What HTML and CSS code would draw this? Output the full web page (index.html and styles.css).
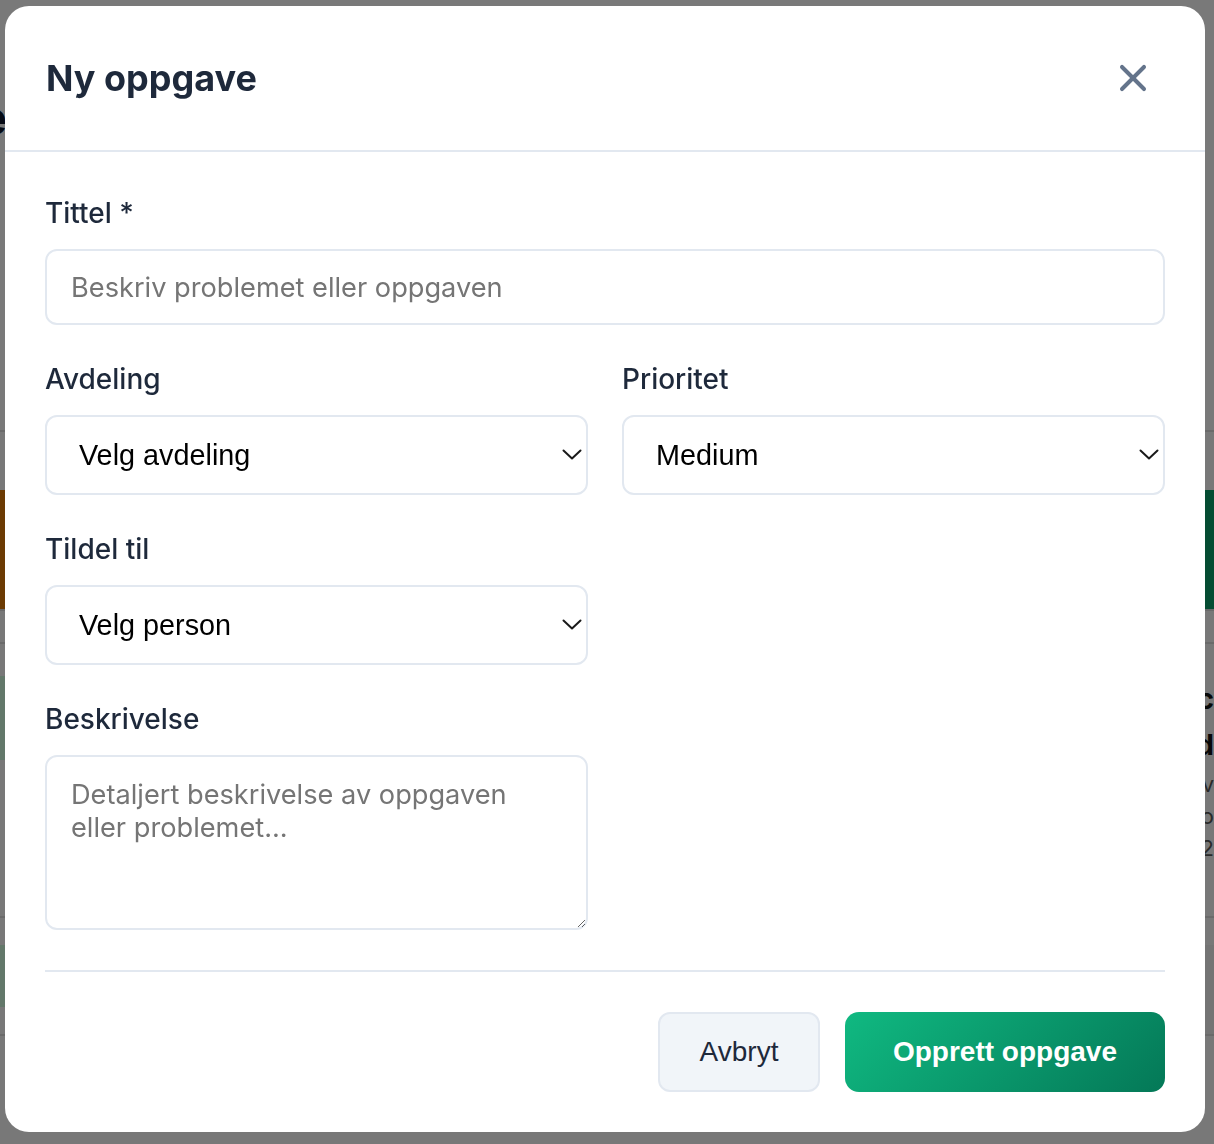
FILE: index.html
```html
<!DOCTYPE html>
<html lang="no">
<head>
<meta charset="utf-8">
<title>Ny oppgave</title>
<link rel="stylesheet" href="styles.css">
</head>
<body>
<div class="page">
  <div class="pg-top">
    <div class="pg-title-wrap"><span class="pg-title">Oppgave</span></div>
  </div>
  <div class="pg-gap pg-line"></div>
  <div class="pg-cards">
    <div class="pg-card pg-card-amber"></div>
    <div class="pg-card pg-card-green"><span>Se</span></div>
  </div>
  <div class="pg-gap2 pg-line"></div>
  <div class="pg-list">
    <div class="pg-tag"></div>
    <div class="pg-info"><b>Oc</b><b>Td</b><small>Ansv</small><small>Pro</small><small>202</small></div>
  </div>
  <div class="pg-gap3 pg-line"></div>
  <div class="pg-list2">
    <div class="pg-tag"></div>
    <div class="pg-num">0</div>
  </div>
</div>

<div class="overlay">
  <div class="modal">
    <header class="modal-header">
      <h2 class="modal-title">Ny oppgave</h2>
      <button class="close-btn" type="button" aria-label="Lukk">
        <svg width="44" height="44" viewBox="0 0 24 24" fill="none" stroke="#64748b" stroke-width="2.2" stroke-linecap="round" stroke-linejoin="round"><path d="M18 6 6 18"/><path d="m6 6 12 12"/></svg>
      </button>
    </header>
    <form class="modal-body">
      <div class="field">
        <label class="field-label">Tittel *</label>
        <input class="text-input" type="text" placeholder="Beskriv problemet eller oppgaven">
      </div>
      <div class="grid-row">
        <div class="field">
          <label class="field-label">Avdeling</label>
          <div class="select-wrap">
            <select class="select"><option>Velg avdeling</option></select>
            <svg class="chev" width="20" height="11" viewBox="0 0 20 11" fill="none" stroke="#1a1a1a" stroke-width="2" stroke-linecap="round" stroke-linejoin="round"><path d="M1.5 1.5 10 9.5 18.5 1.5"/></svg>
          </div>
        </div>
        <div class="field">
          <label class="field-label">Prioritet</label>
          <div class="select-wrap">
            <select class="select"><option>Medium</option></select>
            <svg class="chev" width="20" height="11" viewBox="0 0 20 11" fill="none" stroke="#1a1a1a" stroke-width="2" stroke-linecap="round" stroke-linejoin="round"><path d="M1.5 1.5 10 9.5 18.5 1.5"/></svg>
          </div>
        </div>
      </div>
      <div class="grid-row">
        <div class="field">
          <label class="field-label">Tildel til</label>
          <div class="select-wrap">
            <select class="select"><option>Velg person</option></select>
            <svg class="chev" width="20" height="11" viewBox="0 0 20 11" fill="none" stroke="#1a1a1a" stroke-width="2" stroke-linecap="round" stroke-linejoin="round"><path d="M1.5 1.5 10 9.5 18.5 1.5"/></svg>
          </div>
        </div>
      </div>
      <div class="grid-row last">
        <div class="field">
          <label class="field-label">Beskrivelse</label>
          <textarea class="textarea" placeholder="Detaljert beskrivelse av oppgaven eller problemet..."></textarea>
        </div>
      </div>
      <div class="modal-footer">
        <button class="btn btn-cancel" type="button">Avbryt</button>
        <button class="btn btn-primary" type="button">Opprett oppgave</button>
      </div>
    </form>
  </div>
</div>
</body>
</html>
```

FILE: styles.css
```css
* { box-sizing: border-box; }

html, body {
  margin: 0;
  padding: 0;
}

body {
  width: 1214px;
  height: 1144px;
  overflow: hidden;
  background: #f1f1f1;
  font-family: Inter, "Noto Sans", sans-serif;
}

/* underlying page (mostly hidden by the overlay) */
.page {
  display: flex;
  flex-direction: column;
  width: 1214px;
}
.pg-top {
  height: 430px;
  padding-top: 88px;
  background: #f3f3f3;
}
.pg-title-wrap {
  width: 7px;
  display: flex;
  justify-content: flex-end;
  overflow: visible;
}
.pg-title {
  font-size: 48px;
  font-weight: 700;
  color: #0f172a;
  white-space: nowrap;
}
.pg-line { border-top: 2px solid #d4d4d4; }
.pg-gap { height: 60px; }
.pg-gap2 { height: 33px; }
.pg-gap3 { height: 29px; }
.pg-cards {
  height: 119px;
  display: flex;
  justify-content: space-between;
}
.pg-card { width: 40px; height: 100%; }
.pg-card-amber { background: #d97706; }
.pg-card-green {
  background: #0a9964;
  color: #e5e7eb;
  font-size: 36px;
  display: flex;
  align-items: center;
}
.pg-card-green span { margin-left: -20px; }
.pg-list {
  height: 274px;
  display: flex;
  justify-content: space-between;
  padding-top: 32px;
  border-top: 2px solid #d4d4d4;
}
.pg-tag {
  width: 20px;
  height: 84px;
  background: #c6f0d4;
}
.pg-info {
  width: 30px;
  display: flex;
  flex-direction: column;
  font-size: 28px;
  color: #111;
  overflow: hidden;
  direction: rtl;
}
.pg-info b { line-height: 46px; }
.pg-info small { font-size: 22px; color: #555; line-height: 32px; }
.pg-list2 {
  height: 91px;
  display: flex;
  justify-content: space-between;
  border-bottom: 2px solid #d4d4d4;
}
.pg-list2 .pg-tag { height: 62px; }
.pg-num {
  width: 30px;
  background: #e8e8e8;
  font-size: 30px;
  color: #111;
  padding-top: 10px;
  padding-left: 1px;
}

/* overlay + modal */
.overlay {
  position: fixed;
  inset: 0;
  background: rgba(0, 0, 0, 0.5);
  padding: 6px 0 0 5px;
}

.modal {
  width: 1200px;
  background: #ffffff;
  border-radius: 24px;
  overflow: hidden;
}

.modal-header {
  height: 146px;
  display: flex;
  align-items: center;
  justify-content: space-between;
  padding: 0 40px 0 41px;
  border-bottom: 2px solid #e2e8f0;
}

.modal-title {
  margin: 0;
  font-size: 36px;
  font-weight: 700;
  color: #1e293b;
}

.close-btn {
  background: none;
  border: none;
  padding: 10px;
  margin: 0;
  display: flex;
  cursor: pointer;
}

.modal-body {
  padding: 41px 40px 40px 40px;
  margin: 0;
}

.field {
  display: flex;
  flex-direction: column;
}

.field-label {
  font-size: 28px;
  line-height: 40px;
  font-weight: 500;
  color: #1e293b;
  margin-bottom: 16px;
}

.text-input {
  height: 76px;
  border: 2px solid #e2e8f0;
  border-radius: 12px;
  padding: 0 24px;
  font-family: Inter, "Noto Sans", sans-serif;
  font-size: 27.2px;
  color: #1e293b;
  outline: none;
}
.text-input::placeholder,
.textarea::placeholder {
  color: #757575;
}

.grid-row {
  display: grid;
  grid-template-columns: 1fr 1fr;
  column-gap: 34px;
  margin-top: 34px;
}

.select-wrap {
  position: relative;
}

.select {
  -webkit-appearance: none;
  appearance: none;
  width: 100%;
  height: 80px;
  border: 2px solid #e2e8f0;
  border-radius: 12px;
  background: #ffffff;
  padding: 0 40px 0 32px;
  font-family: "Liberation Sans", Arial, sans-serif;
  font-size: 28.8px;
  color: #000000;
  outline: none;
}

.chev {
  position: absolute;
  right: 6px;
  top: 34px;
  pointer-events: none;
}

.textarea {
  height: 175px;
  border: 2px solid #e2e8f0;
  border-radius: 12px;
  padding: 21px 24px 16px;
  font-family: Inter, "Noto Sans", sans-serif;
  font-size: 27.2px;
  line-height: 33px;
  color: #1e293b;
  resize: vertical;
  outline: none;
}

.modal-footer {
  margin-top: 40px;
  border-top: 2px solid #e2e8f0;
  padding-top: 40px;
  display: flex;
  justify-content: flex-end;
  gap: 25px;
}

.btn {
  height: 80px;
  border-radius: 14px;
  font-family: "Liberation Sans", Arial, sans-serif;
  font-size: 28px;
  cursor: pointer;
}

.btn-cancel {
  width: 162px;
  background: #f1f5f9;
  border: 2px solid #e2e8f0;
  color: #1e293b;
  border-radius: 12px;
}

.btn-primary {
  width: 320px;
  border: none;
  color: #ffffff;
  font-weight: 700;
  background: linear-gradient(135deg, #10b981 0%, #047857 100%);
}
```
